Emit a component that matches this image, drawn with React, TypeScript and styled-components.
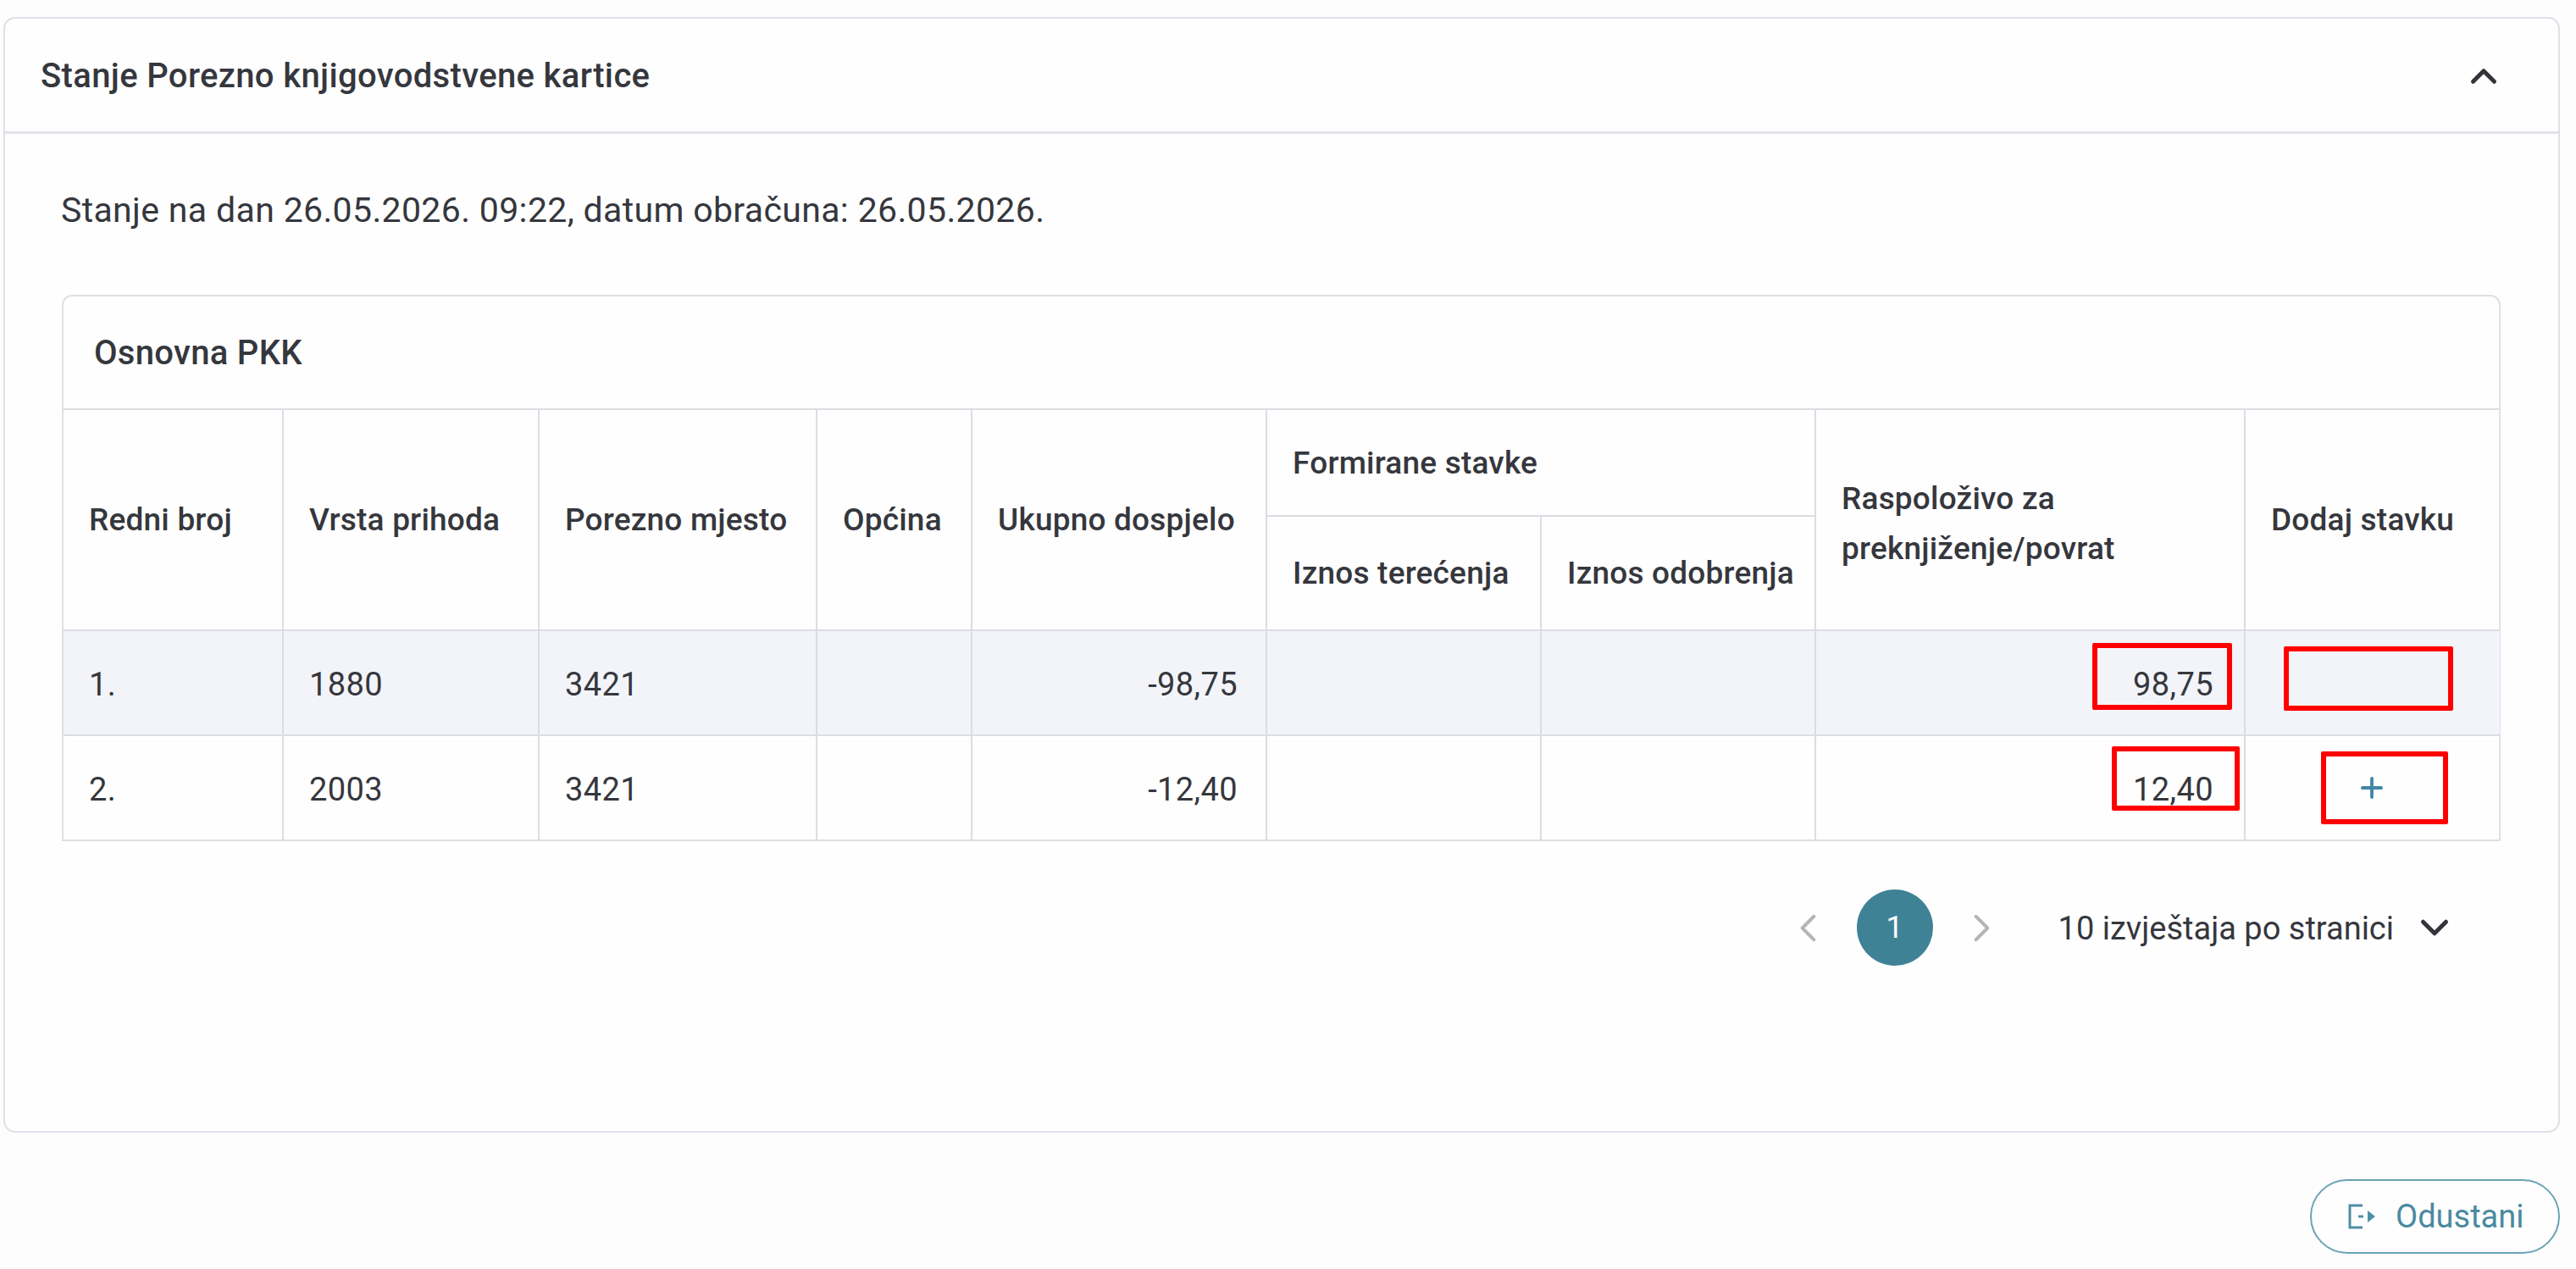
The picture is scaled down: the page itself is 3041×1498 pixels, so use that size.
import styled, { createGlobalStyle } from 'styled-components';
import { ChevronDown, ChevronLeft, ChevronRight, ChevronUp, Plus } from 'lucide-react';

const GlobalStyle = createGlobalStyle`
    html, body {
        margin: 0;
        padding: 0;
        background: #fdfdfe;
    }
    body {
        font-family: Roboto, "Liberation Sans", sans-serif;
        color: #35373d;
    }
`;

type Row = {
    no: string
    type: string
    place: string
    due: string
    available: string
};

const rows: Row[] = [
    { no: '1.', type: '1880', place: '3421', due: '-98,75', available: '98,75' },
    { no: '2.', type: '2003', place: '3421', due: '-12,40', available: '12,40' },
];

const columnWidths = [259, 302, 328, 183, 348, 324, 324, 507, 301];

const ExitIcon = () => (
    <svg width="32" height="30" viewBox="0 0 32 30" fill="none" stroke="#4f8ea5" strokeWidth="3">
        <path d="M17 2H2v26h15" />
        <path d="M12 15h6" />
        <path d="M23 8l9 7-9 7z" fill="#4f8ea5" stroke="none" />
    </svg>
);

export default function App() {
    return (
        <Page>
            <GlobalStyle />
            <Card>
                <CardHeader>
                    <CardTitle>Stanje Porezno knjigovodstvene kartice</CardTitle>
                    <ChevronUp size={50} strokeWidth={2.4} color="#33353a" />
                </CardHeader>
                <CardBody>
                    <Summary>Stanje na dan 26.05.2026. 09:22, datum obračuna: 26.05.2026.</Summary>
                    <TableCard>
                        <TableTitle>Osnovna PKK</TableTitle>
                        <Table>
                            <colgroup>
                                {columnWidths.map((w, i) => (
                                    <col key={i} width={w} />
                                ))}
                            </colgroup>
                            <thead>
                                <tr>
                                    <Th rowSpan={2}>Redni broj</Th>
                                    <Th rowSpan={2}>Vrsta prihoda</Th>
                                    <Th rowSpan={2}>Porezno mjesto</Th>
                                    <Th rowSpan={2}>Općina</Th>
                                    <Th rowSpan={2}>Ukupno dospjelo</Th>
                                    <Th colSpan={2} $height={126}>Formirane stavke</Th>
                                    <Th rowSpan={2} $offset={8}>Raspoloživo za<br />preknjiženje/povrat</Th>
                                    <Th rowSpan={2}>Dodaj stavku</Th>
                                </tr>
                                <tr>
                                    <Th $height={135}>Iznos terećenja</Th>
                                    <Th $height={135}>Iznos odobrenja</Th>
                                </tr>
                            </thead>
                            <tbody>
                                {rows.map((row, i) => (
                                    <BodyRow key={row.no} $shaded={i === 0}>
                                        <Td>{row.no}</Td>
                                        <Td>{row.type}</Td>
                                        <Td>{row.place}</Td>
                                        <Td />
                                        <Td $right={33}>{row.due}</Td>
                                        <Td />
                                        <Td />
                                        <Td $right={36}>
                                            {row.available}
                                            {i === 0
                                                ? <Mark $right={14} $top={14} $width={165} $height={79} />
                                                : <Mark $right={5} $top={12} $width={151} $height={76} />}
                                        </Td>
                                        <Td $center>
                                            {i === 0
                                                ? <Mark $left={45} $top={18} $width={200} $height={76} />
                                                : (
                                                    <>
                                                        <AddButton><Plus size={38} strokeWidth={2.4} /></AddButton>
                                                        <Mark $left={89} $top={18} $width={150} $height={86} />
                                                    </>
                                                )}
                                        </Td>
                                    </BodyRow>
                                ))}
                            </tbody>
                        </Table>
                    </TableCard>
                    <Pagination>
                        <ChevronLeft size={55} strokeWidth={1.7} color="#b4b5b7" />
                        <PageNumber>1</PageNumber>
                        <ChevronRight size={55} strokeWidth={1.7} color="#b4b5b7" />
                        <PageSize>10 izvještaja po stranici</PageSize>
                        <ChevronDown size={54} strokeWidth={2.2} color="#33353a" />
                    </Pagination>
                </CardBody>
            </Card>
            <Footer>
                <CancelButton>
                    <ExitIcon />
                    Odustani
                </CancelButton>
            </Footer>
        </Page>
    );
}

const Page = styled.div`
    box-sizing: border-box;
    width: 3041px;
    height: 1498px;
    padding: 20px 19px 0 4px;
    overflow: hidden;
`;

const Card = styled.section`
    box-sizing: border-box;
    height: 1317px;
    border: 2px solid #dfe0e7;
    border-radius: 14px;
    background: #fefefe;
`;

const CardHeader = styled.header`
    box-sizing: border-box;
    height: 136px;
    display: flex;
    align-items: center;
    justify-content: space-between;
    padding: 2px 63px 0 42px;
    border-bottom: 3px solid #e2e3e9;
`;

const CardTitle = styled.h2`
    margin: 0;
    font-size: 40px;
    font-weight: 500;
    letter-spacing: 0.35px;
`;

const CardBody = styled.div`
    padding: 0 68px 0 67px;
`;

const Summary = styled.p`
    margin: 0 0 0 -1px;
    height: 190px;
    padding-top: 65px;
    box-sizing: border-box;
    font-size: 41px;
    line-height: 50px;
    letter-spacing: 0.35px;
`;

const TableCard = styled.div`
    border: 2px solid #dfe0e7;
    border-bottom: none;
    border-radius: 12px 12px 0 0;
    background: #fefefe;
`;

const TableTitle = styled.div`
    box-sizing: border-box;
    height: 132px;
    padding-left: 36px;
    display: flex;
    align-items: center;
    font-size: 40px;
    font-weight: 500;
    letter-spacing: 0.3px;
`;

const Table = styled.table`
    width: 100%;
    table-layout: fixed;
    border-collapse: collapse;
`;

const Th = styled.th<{ $height?: number; $offset?: number }>`
    height: ${(p) => (p.$height ? `${p.$height}px` : 'auto')};
    padding: ${(p) => p.$offset ?? 0}px 30px 0;
    box-sizing: border-box;
    border: 2px solid #dcdde3;
    text-align: left;
    font-size: 37px;
    font-weight: 500;
    letter-spacing: 0.2px;
    line-height: 59px;
    white-space: nowrap;

    &:first-child {
        border-left: none;
    }
    &:last-child {
        border-right: none;
    }
`;

const BodyRow = styled.tr<{ $shaded: boolean }>`
    height: 124px;
    background: ${(p) => (p.$shaded ? '#f3f4f9' : 'transparent')};
`;

const Td = styled.td<{ $right?: number; $center?: boolean }>`
    position: relative;
    padding: 3px ${(p) => p.$right ?? 30}px 0;
    border: 2px solid #dcdde3;
    font-size: 38px;
    letter-spacing: 0.4px;
    text-align: ${(p) => (p.$right ? 'right' : p.$center ? 'center' : 'left')};

    &:first-child {
        border-left: none;
    }
    &:last-child {
        border-right: none;
    }
`;

const AddButton = styled.span`
    display: inline-flex;
    vertical-align: middle;
    margin: 0 2px 6px 0;
    color: #3f86a6;
`;

// red annotation frames drawn over the cells
const Mark = styled.span<{ $left?: number; $right?: number; $top: number; $width: number; $height: number }>`
    position: absolute;
    box-sizing: border-box;
    top: ${(p) => p.$top}px;
    ${(p) => (p.$left !== undefined ? `left: ${p.$left}px;` : '')}
    ${(p) => (p.$right !== undefined ? `right: ${p.$right}px;` : '')}
    width: ${(p) => p.$width}px;
    height: ${(p) => p.$height}px;
    border: 6px solid #fe0000;
    border-radius: 2px;
`;

const Pagination = styled.div`
    display: flex;
    align-items: center;
    justify-content: flex-end;
    margin-top: 57px;
    padding-right: 51px;
`;

const PageNumber = styled.div`
    width: 90px;
    height: 90px;
    margin: 0 30px;
    border-radius: 50%;
    background: #3f8296;
    color: #ffffff;
    display: flex;
    align-items: center;
    justify-content: center;
    font-size: 36px;
`;

const PageSize = styled.div`
    margin: 2px 21px 0 63px;
    font-size: 38px;
`;

const Footer = styled.div`
    display: flex;
    justify-content: flex-end;
    margin-top: 55px;
`;

const CancelButton = styled.button`
    box-sizing: border-box;
    width: 295px;
    height: 88px;
    border: 2px solid #6ba3b5;
    border-radius: 44px;
    background: #fefefe;
    color: #4a8aa0;
    display: flex;
    align-items: center;
    gap: 24px;
    font-family: inherit;
    font-size: 38px;
    font-weight: 400;
    padding: 0 0 0 43px;
`;
